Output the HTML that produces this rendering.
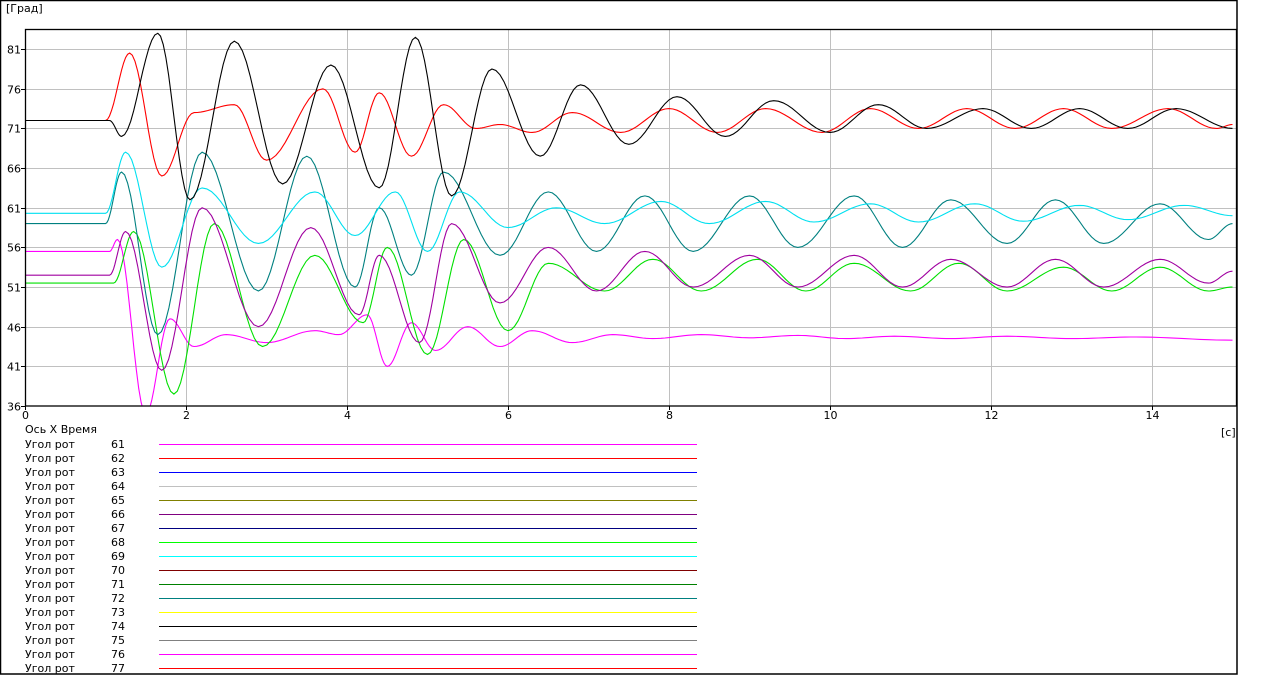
<!DOCTYPE html>
<html><head><meta charset="utf-8"><style>
body{margin:0;width:1277px;height:696px;background:#fff;overflow:hidden;font-family:"DejaVu Sans",sans-serif;font-size:11px;color:#000}
</style></head><body>
<svg id="s" width="1277" height="696" xmlns="http://www.w3.org/2000/svg" font-family="DejaVu Sans, sans-serif" font-size="11">
<rect x="0.5" y="0.5" width="1236.5" height="673.5" fill="#fff" stroke="#000" stroke-width="1.5"/>
<text x="6" y="12">[Град]</text>
<g id="grid" stroke="#c0c0c0" stroke-width="1" shape-rendering="crispEdges"></g>
<defs><clipPath id="c"><rect x="25" y="29" width="1212" height="377"/></clipPath></defs>
<g id="curves" clip-path="url(#c)" fill="none" stroke-width="1.1"></g>
<rect x="25.5" y="29.5" width="1211" height="376.5" fill="none" stroke="#000" stroke-width="1.3"/>
<g id="labels"></g>
<text x="1221" y="436">[c]</text>
<text x="25" y="433">Ось X  Время</text>
<g id="legend" shape-rendering="crispEdges"></g>
</svg>
<script>
var NS="http://www.w3.org/2000/svg";
function X(t){return 25+80.5*t}
function Y(v){return 406-(v-36)*7.93}
function el(p,n,a,txt){var e=document.createElementNS(NS,n);for(var k in a)e.setAttribute(k,a[k]);if(txt!==undefined)e.textContent=txt;document.getElementById(p).appendChild(e);}
var ys=[81,76,71,66,61,56,51,46,41,36];
ys.forEach(function(v){var y=Math.round(Y(v))+0.5;if(v>36)el("grid","line",{x1:25,x2:1237,y1:y,y2:y});el("labels","text",{x:21,y:y+4,"text-anchor":"end"},v);el("labels","line",{x1:21,x2:25,y1:y,y2:y,stroke:"#000"});});
for(var t=0;t<=14;t+=2){var x=Math.round(X(t))+0.5;if(t>0)el("grid","line",{x1:x,x2:x,y1:29,y2:406});el("labels","text",{x:x,y:419,"text-anchor":"middle"},t);el("labels","line",{x1:x,x2:x,y1:406,y2:410,stroke:"#000"});}
function curve(pts,col){var d="";for(var i=0;i<pts.length-1;i++){var a=pts[i],b=pts[i+1];for(var k=0;k<=12;k++){var f=k/12;var t=a[0]+(b[0]-a[0])*f;var v=a[1]+(b[1]-a[1])*(1-Math.cos(Math.PI*f))/2;d+=(d?"L":"M")+X(t).toFixed(1)+" "+Y(v).toFixed(1);}}el("curves","path",{d:d,stroke:col});}
curve([[0,55.5],[1.05,55.5],[1.15,57],[1.5,35],[1.8,47],[2.1,43.5],[2.5,45],[3.0,44],[3.6,45.5],[3.9,45],[4.25,47.5],[4.5,41],[4.8,46.5],[5.1,43],[5.5,46],[5.9,43.5],[6.3,45.5],[6.8,44],[7.3,45],[7.8,44.5],[8.4,45],[9.0,44.6],[9.6,44.9],[10.2,44.5],[10.8,44.8],[11.5,44.5],[12.2,44.8],[13,44.5],[13.8,44.7],[15,44.3]],"#ff00ff");
curve([[0,51.5],[1.1,51.5],[1.35,58],[1.85,37.5],[2.35,59],[2.95,43.5],[3.6,55],[4.2,46.5],[4.5,56],[5.0,42.5],[5.45,57],[6.0,45.5],[6.5,54],[7.2,50.5],[7.8,54.5],[8.4,50.5],[9.1,54.5],[9.7,50.5],[10.3,54],[11,50.5],[11.6,54],[12.2,50.5],[12.9,53.5],[13.5,50.5],[14.1,53.5],[14.7,50.5],[15,51]],"#00e000");
curve([[0,52.5],[1.05,52.5],[1.25,58],[1.7,40.5],[2.2,61],[2.9,46],[3.55,58.5],[4.15,47.5],[4.4,55],[4.9,44],[5.3,59],[5.9,49],[6.5,56],[7.1,50.5],[7.7,55.5],[8.3,51],[9.0,55],[9.6,51],[10.3,55],[10.9,51],[11.5,54.5],[12.2,51],[12.8,54.5],[13.4,51],[14.1,54.5],[14.7,51.5],[15,53]],"#a000a0");
curve([[0,59],[1.0,59],[1.2,65.5],[1.65,45],[2.2,68],[2.9,50.5],[3.5,67.5],[4.1,51],[4.4,61],[4.8,52.5],[5.2,65.5],[5.9,55],[6.5,63],[7.1,55.5],[7.7,62.5],[8.3,55.5],[9.0,62.5],[9.6,56],[10.3,62.5],[10.9,56],[11.5,62],[12.2,56.5],[12.8,62],[13.4,56.5],[14.1,61.5],[14.7,57],[15,59]],"#008080");
curve([[0,60.3],[1.0,60.3],[1.25,68],[1.7,53.5],[2.2,63.5],[2.9,56.5],[3.6,63],[4.1,57.5],[4.6,63],[5.0,55.5],[5.4,63],[6.0,58.5],[6.6,61],[7.2,59],[7.9,61.8],[8.5,59],[9.2,61.8],[9.8,59.2],[10.5,61.5],[11.1,59.2],[11.8,61.5],[12.4,59.3],[13.1,61.3],[13.7,59.5],[14.4,61.3],[15,60]],"#00e0f0");
curve([[0,72],[1.0,72],[1.3,80.5],[1.7,65],[2.1,73],[2.6,74],[3.0,67],[3.7,76],[4.1,68],[4.4,75.5],[4.8,67.5],[5.2,74],[5.6,71],[5.9,71.5],[6.3,70.5],[6.8,73],[7.4,70.5],[8.0,73.5],[8.6,70.5],[9.2,73.5],[9.9,70.5],[10.5,73.5],[11.1,71],[11.7,73.5],[12.3,71],[12.9,73.5],[13.5,71],[14.2,73.5],[14.8,71],[15,71.5]],"#ff0000");
curve([[0,72],[1.05,72],[1.2,70],[1.65,83],[2.05,62],[2.6,82],[3.2,64],[3.8,79],[4.4,63.5],[4.85,82.5],[5.3,62.5],[5.8,78.5],[6.4,67.5],[6.9,76.5],[7.5,69],[8.1,75],[8.7,70],[9.3,74.5],[10.0,70.5],[10.6,74],[11.2,71],[11.9,73.5],[12.5,71],[13.1,73.5],[13.7,71],[14.3,73.5],[15,71]],"#000000");
var cols=["#ff00ff","#ff0000","#0000ff","#c0c0c0","#808000","#800080","#000080","#00ff00","#00ffff","#800000","#008000","#008080","#ffff00","#000000","#808080","#ff00ff","#ff0000"];
for(var i=0;i<17;i++){var y=448+i*14;el("legend","text",{x:25,y:y},"Угол рот");el("legend","text",{x:111,y:y},61+i);el("legend","line",{x1:159,x2:697,y1:y-3.5,y2:y-3.5,stroke:cols[i],"stroke-width":1});}
</script>
</body></html>
